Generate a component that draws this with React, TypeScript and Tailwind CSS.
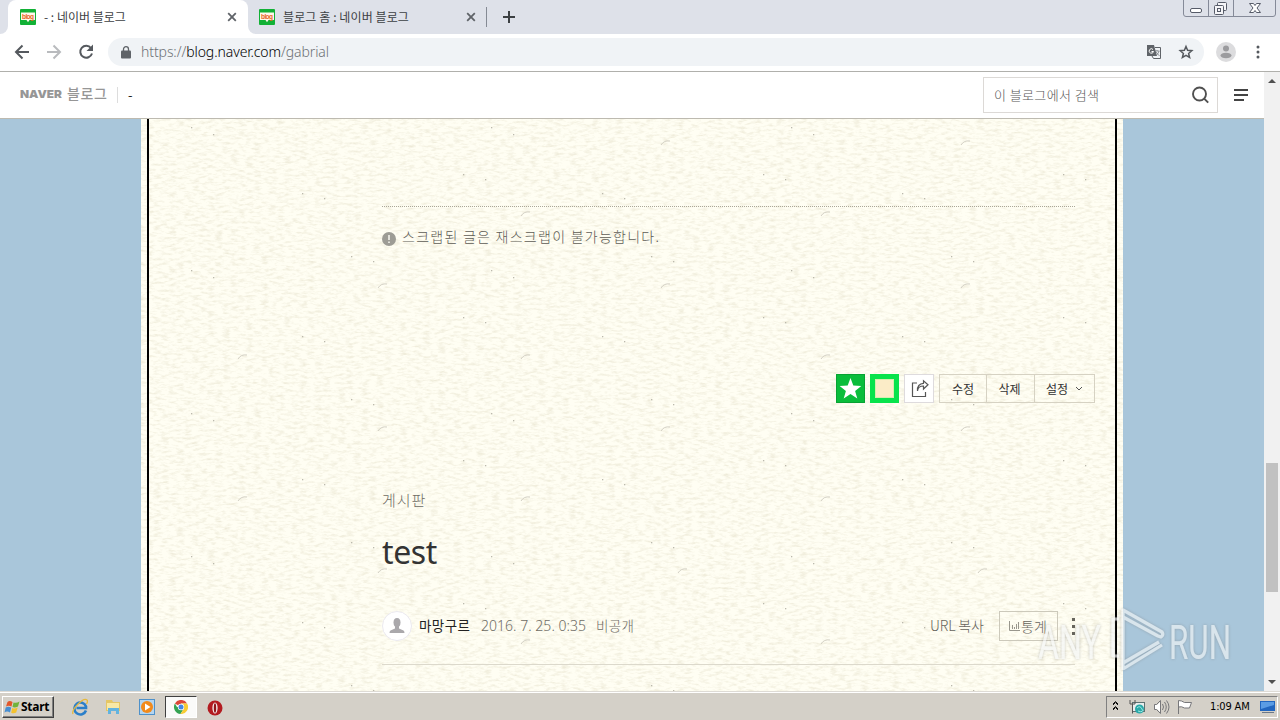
import React from "react";

const K = "font-['Noto_Sans_CJK_KR',sans-serif]";

function BlogIcon() {
  return (
    <svg width="16" height="16" viewBox="0 0 16 16" className="shrink-0">
      <rect width="16" height="16" rx="1" fill="#12b136" />
      <path d="M1 3.500h14v7.500H9.500l-1.500 2.200L6.500 11H1z" fill="#fff8ec" />
      <text x="8" y="9.500" textAnchor="middle" fontSize="6.500" fontWeight="700" fontFamily="Liberation Sans" fill="#e8641c" textLength="12">blog</text>
    </svg>
  );
}

function Close() {
  return (
    <svg width="10" height="10" viewBox="0 0 10 10" className="shrink-0" stroke="#5f6368" strokeWidth="1.800">
      <path d="M1.200 1.200l7.600 7.600M8.800 1.200L1.200 8.800" />
    </svg>
  );
}

function TabStrip() {
  return (
    <div className="flex h-[34px] shrink-0 bg-[#dee1e9]">
      <div className="flex w-2 items-end bg-white"><div className="h-full w-full rounded-br-lg bg-[#dee1e9]" /></div>
      <div className="w-[240px] bg-[#dee1e9]">
        <div className="flex h-full items-center rounded-t-lg bg-white pl-3 pr-[11px]">
          <BlogIcon />
          <span className="ml-2 flex-1 whitespace-nowrap text-[12px] text-[#3c4043]">- : 네이버 블로그</span>
          <Close />
        </div>
      </div>
      <div className="w-2 bg-white"><div className="h-full w-full rounded-bl-lg bg-[#dee1e9]" /></div>
      <div className="flex w-[231px] items-center pl-[3px] pr-[11px]">
        <BlogIcon />
        <span className="ml-2 flex-1 whitespace-nowrap text-[12px] tracking-[0.1px] text-[#3c4043]">블로그 홈 : 네이버 블로그</span>
        <Close />
      </div>
      <div className="-ml-px mt-[7px] h-5 w-px bg-[#858a94]" />
      <svg width="14" height="14" viewBox="0 0 14 14" className="ml-[15px] mt-[10px]" stroke="#3c4043" strokeWidth="2"><path d="M1 7h12M7 1v12" /></svg>
      <svg width="96" height="18" viewBox="0 0 96 18" className="ml-auto mr-1" fill="none" stroke="#858a98">
        <path d="M3.500 0v14q0 2.500 2.500 2.500h87q2.500 0 2.500-2.500V0M28.500 0v16M53.500 0v16" />
        <g transform="translate(-1 0)" stroke="#565b68">
          <rect x="11.500" y="8.500" width="11" height="4" rx="1.500" fill="#fff" />
          <rect x="38.500" y="2.500" width="9" height="8" rx="1" fill="#f5f5f8" />
          <rect x="35.500" y="5.500" width="9" height="9" rx="1" fill="#f5f5f8" />
          <rect x="38.500" y="8.500" width="3" height="3" />
          <path d="M70.500 3.500h4l1.500 2 1.500-2h4l-3.500 4.500 3.500 4.500h-4l-1.500-2-1.500 2h-4L74 8z" fill="#fff" />
        </g>
      </svg>
    </div>
  );
}

function Toolbar() {
  return (
    <div className="flex h-[38px] shrink-0 items-center border-b border-[#b0b0ac] bg-white pb-px">
      <svg width="108" height="36" viewBox="0 0 108 36" fill="none" strokeWidth="2">
        <path d="M29 18H16M22.500 11.500L16 18l6.500 6.500" stroke="#55595e" />
        <path d="M47 18h13M53.500 11.500L60 18l-6.500 6.500" stroke="#b9bbbe" />
        <path d="M91 14A6 6 0 1 0 92 19.500" stroke="#55595e" />
        <path d="M93 10.500v6.500h-6.500z" fill="#55595e" />
      </svg>
      <div className="flex h-7 w-[1096px] items-center rounded-full bg-[#f0f3f6] pl-[13px] pr-[10px]">
        <svg width="10" height="13" viewBox="0 0 10 13"><rect y="4.500" width="10" height="8" rx="1" fill="#5f6368" /><path d="M2.500 5V3.200a2.500 2.500 0 0 1 5 0V5" fill="none" stroke="#5f6368" strokeWidth="1.300" /></svg>
        <svg width="200" height="24" className="ml-[10px]" fontFamily="'Noto Sans', sans-serif" fontSize="14" fontWeight="300">
          <text x="0" y="17" textLength="188" lengthAdjust="spacing" fill="#6d7175">https://<tspan fill="#000">blog.naver.com</tspan>/gabrial</text>
        </svg>
        <svg width="16" height="16" viewBox="0 0 16 16" className="ml-auto">
          <path d="M1 1h7l3 11H1z" fill="#5f6368" />
          <path d="M9 3.500h5.500v11H7.500L6 12" fill="none" stroke="#5f6368" />
          <path d="M7 5.500A2.200 2.200 0 1 0 7.500 7.500H5.500" fill="none" stroke="#fff" />
          <path d="M9 7h4.500M11 6v1M13 7q-.500 3-3 4.500M10 8l3.500 4" fill="none" stroke="#7a7e83" strokeWidth=".8" />
        </svg>
        <svg width="16" height="16" viewBox="0 0 16 16" className="ml-4" fill="none" stroke="#55595e" strokeWidth="1.500"><path d="M8 2.500l1.600 3.800 4.200.4-3.200 2.700 1 4.100L8 11.300l-3.600 2.200 1-4.100-3.200-2.700 4.200-.4z" /></svg>
      </div>
      <svg width="20" height="20" viewBox="0 0 20 20" className="ml-3"><circle cx="10" cy="10" r="10" fill="#dcdcde" /><circle cx="10" cy="6.500" r="3" fill="#9b9b9e" /><ellipse cx="10" cy="13.500" rx="5.500" ry="2.800" fill="#9b9b9e" /></svg>
      <svg width="4" height="14" viewBox="0 0 4 14" className="ml-5" fill="#55595e"><circle cx="2" cy="2" r="1.500" /><circle cx="2" cy="7" r="1.500" /><circle cx="2" cy="12" r="1.500" /></svg>
    </div>
  );
}

function BlogHeader() {
  return (
    <div className="flex h-[47px] shrink-0 items-center border-b border-[#bdbab0] bg-white pl-5">
      <svg width="90" height="24" className="shrink-0" fill="#969696">
        <text x="0" y="15" fontFamily="Inter, sans-serif" fontWeight="900" fontSize="11" textLength="42" lengthAdjust="spacingAndGlyphs">NAVER</text>
        <text x="47" y="16" fontFamily="'Noto Sans CJK KR', sans-serif" fontSize="14" textLength="40" fontWeight="500">블로그</text>
      </svg>
      <div className="ml-[7px] h-4 w-px bg-[#ddd]" />
      <span className="ml-[10px] text-[13px] text-[#222]">-</span>
      <div className="ml-auto flex h-9 w-[235px] items-center border border-[#dcd9d6] pl-[10px] pr-2">
        <span className="flex-1 text-[13px] font-light tracking-[0.4px] text-[#555]">이 블로그에서 검색</span>
        <svg width="18" height="18" viewBox="0 0 18 18" fill="none" stroke="#505050" strokeWidth="1.900"><circle cx="8.500" cy="8" r="6.500" /><path d="M13.200 12.700l4 4" /></svg>
      </div>
      <svg width="14" height="12" viewBox="0 0 14 12" className="ml-4 mr-4" fill="#444"><path d="M0 0h14v2H0zM0 5h14v2H0zM0 10h10v2H0z" /></svg>
    </div>
  );
}

const curls = [[525, 93], [825, 93], [665, 22], [965, 22], [525, 236], [825, 236], [665, 165], [965, 165], [525, 378], [825, 378], [665, 308], [965, 308], [382, 450], [682, 450], [982, 450], [525, 521], [825, 521], [382, 165], [382, 308], [242, 236], [242, 378]];
const specks = [[191, 8], [213, 15], [302, 74], [324, 79], [351, 137], [373, 142], [463, 55], [485, 60]];

function Paper() {
  return (
    <svg width="982" height="572" viewBox="141 0 982 572" className="absolute inset-0">
      <defs>
        <filter id="fibre" x="0" y="0" width="100%" height="100%" colorInterpolationFilters="sRGB">
          <feTurbulence type="fractalNoise" baseFrequency="0.13 0.38" numOctaves="3" seed="29" />
          <feColorMatrix values="0 0 0 0 0.82  0 0 0 0 0.79  0 0 0 0 0.67  1.400 0 0 0 -0.620" />
        </filter>
      </defs>
      <rect x="141" width="982" height="572" fill="#fffef3" />
      <rect x="141" width="982" height="572" filter="url(#fibre)" opacity=".58" />
      {curls.map(([x, y], i) => (
        <path key={i} d={`M${x - 4} ${y + 4}q3-5 9-4`} fill="none" stroke="#d3d0c4" />
      ))}
      {[0, 1, 2, 3].flatMap((r) => [0, 300, 600].flatMap((dx) => specks.map(([x, y]) => (
        <rect key={`${r}-${dx}-${x}`} x={x + dx} y={y + r * 143} width="1.300" height="1.300" fill="#bbb8ac" />
      ))))}
      <path d="M148 0v572M1116 0v572" stroke="#000" strokeWidth="2" />
    </svg>
  );
}

function Actions() {
  return (
    <div className="flex h-[29px] gap-[5px] self-end pr-7 text-[12px] text-[#333]">
      <div className="w-[29px] bg-[#0abd3b]"><svg width="29" height="29"><path d="M.5.5h28v28H.5z" fill="none" stroke="#08a233" /><path d="M14.500 4l2.800 7.600 8 .3-6.200 5 2.200 7.700-6.800-4.500-6.800 4.500 2.200-7.700-6.200-5 8-.3z" fill="#fff" /></svg></div>
      <div className="flex w-[29px] items-center justify-center bg-[#08e34c]"><div className="h-[19px] w-[19px] border border-[#d5efae] bg-[#fbecc7]" /></div>
      <div className="w-[30px] border border-[#dedbdd] bg-white">
        <svg width="28" height="27" viewBox="0 0 28 27" fill="none" stroke="#555" strokeWidth="1.200"><path d="M12 8H7.500v13.500h13V17" /><path d="M12.500 16c.3-3.500 2.500-5 6-5v3l4.500-4.300L18.500 5.800v2.500c-4 .3-6.500 3-6 7.700z" /></svg>
      </div>
      <div className="flex w-[156px] border border-[#d6d2c3] leading-[27px]">
        <div className="w-[46px] text-center">수정</div>
        <div className="w-12 border-l border-[#d6d2c3] pr-0.5 text-center">삭제</div>
        <div className="flex flex-1 items-center border-l border-[#d6d2c3] pl-[11px]">설정<svg width="8" height="6" className="ml-[7px]" fill="none" stroke="#555"><path d="M1 1l3 3 3-3" /></svg></div>
      </div>
    </div>
  );
}

function Post() {
  return (
    <div className="relative w-[982px] shrink-0 overflow-hidden">
      <Paper />
      <div className="relative flex h-full flex-col pl-[241px]">
        <svg width="693" height="1" className="mt-[87px] shrink-0"><path d="M0 .5h693" stroke="#aaa798" strokeDasharray="1 1" /></svg>
        <div className="mt-5 flex h-[22px] items-center text-[14px] font-light text-[#66645c]">
          <svg width="14" height="14" viewBox="0 0 14 14" className="mr-[6px] mt-[2px]"><circle cx="7" cy="7" r="7" fill="#9d9c95" /><path d="M6 3h2v5H6zM6 9.500h2v1.500H6z" fill="#e2e1da" /></svg>
          <svg width="270" height="22"><text x="0" y="15" fill="#5e5c55" textLength="257">스크랩된 글은 재스크랩이 불가능합니다.</text></svg>
        </div>
        <div className="mt-[125px] flex flex-col"><Actions /></div>
        <div className="mt-[85px] h-6 text-[15px] font-light leading-6 tracking-[1px] text-[#6e6c64]">게시판</div>
        <div className="mt-[18px] flex h-11 items-center font-['Noto_Sans',sans-serif] text-[32px] leading-[44px] tracking-[-0.4px] text-[#333]">test</div>
        <div className="mt-[37px] flex h-[30px] items-center text-[13px]">
          <svg width="30" height="30" viewBox="0 0 30 30"><circle cx="15" cy="15" r="14.500" fill="#fff" stroke="#ebe9ef" /><ellipse cx="15" cy="11.500" rx="3.500" ry="4.500" fill="#aaa8ab" /><path d="M13 14h4v3.500l4.500 2q1 .8 1 2.500h-15q0-1.700 1-2.500l4.500-2z" fill="#aaa8ab" /></svg>
          <svg width="518" height="30" fontSize="13.500" className="shrink-0">
            <text x="7" y="19.500" fill="#222" textLength="51">마망구르</text>
            <text x="69" y="19.500" fill="#6e6c64" fontSize="14" fontWeight="300" fontFamily="'Noto Sans', sans-serif" textLength="105">2016. 7. 25. 0:35</text>
            <text x="184" y="19.500" fill="#6e6c64" fontWeight="300" textLength="38">비공개</text>
          </svg>
          <svg width="69" height="30" className="shrink-0"><text x="0" y="19.500" fontSize="14" fill="#66645c" fontWeight="300" textLength="54">URL 복사</text></svg>
          <div className="flex h-[30px] w-[59px] items-center border border-[#ccc9bb] pl-[9px] text-[#66645c]">
            <svg width="12" height="11" fill="none" stroke="#99978d"><path d="M.5 0v9.500H11M3.500 4v4M5.500 6v2M7.500 3v5M9.500 1v7" /></svg>
            <span className="whitespace-nowrap text-[14px] font-light">통계</span>
          </div>
          <svg width="4" height="18" className="ml-[14px]" fill="#66645c"><path d="M0 1h3v3H0zM0 8h3v3H0zM0 15h3v3H0z" /></svg>
        </div>
        <div className="mt-[23px] h-px w-[693px] bg-[#dcd9cc]" />
      </div>
    </div>
  );
}

function Scrollbar() {
  return (
    <div className="flex w-4 shrink-0 flex-col items-center bg-[#f1f1f1]">
      <svg width="8" height="4" className="mt-[7px]" fill="#505050"><path d="M0 4l4-4 4 4z" /></svg>
      <div className="mt-[380px] h-[129px] w-3 bg-[#c1c1c1]" />
      <svg width="8" height="4" className="mt-[88px]" fill="#505050"><path d="M0 0h8L4 4z" /></svg>
    </div>
  );
}

function Taskbar() {
  return (
    <div className="flex h-[29px] shrink-0 items-center border-t border-[#dedbd5] bg-[#d4d0c8] shadow-[inset_0_1px_0_#fff]">
      <div className="ml-[2px] mt-[2px] flex h-[22px] w-[52px] items-center border border-b-[#404040] border-l-white border-r-[#404040] border-t-white pl-px shadow-[inset_-1px_-1px_0_#808080]">
        <svg width="17" height="16" viewBox="0 0 16 16" className="shrink-0"><path d="M3 3q2-2 5 0L7 7.500q-3-1.500-5.500 0z" fill="#e2572b" /><path d="M9 3.500q3 1 6-1l-1.500 5q-3 1.500-5.500.500z" fill="#70b33c" /><path d="M1.200 8.500q2.500-1.500 5.500 0l-1.200 5q-3-2-5.500 0z" fill="#468ed2" /><path d="M7.700 9q2.500 1.300 5.500-.500l-1.500 5q-2.500 1.500-5 .300z" fill="#f4c22e" /></svg>
        <span className="font-['Noto_Sans',sans-serif] text-[12px] font-bold leading-4 tracking-[-0.25px] text-black">Start</span>
      </div>
      <svg width="16" height="18" viewBox="0 0 16 18" className="ml-[18px] mt-px" fill="none"><path d="M14 12.500A6 6 0 1 1 14 8.500v1.500H4.500" stroke="#2b7fc9" strokeWidth="2.600" /><path d="M1 16C-1 12 11-1 15 2q1.200 1.200-.500 4" stroke="#e6b93c" strokeWidth="1.300" /></svg>
      <svg width="17" height="18" viewBox="0 0 17 18" className="ml-[17px] mt-px"><path d="M1 2h6l1 2h7v9H1z" fill="#e5c665" /><path d="M2 5h12v7H2z" fill="#f8e8a5" /><path d="M3 16v-6h11v6h-3v-3H6v3z" fill="#62b3df" /></svg>
      <svg width="17" height="17" viewBox="0 0 17 17" className="ml-[17px] mt-[2px]"><rect x=".5" y=".5" width="15" height="15" fill="#b4d5f0" stroke="#4e91ca" /><circle cx="8" cy="8" r="6" fill="#f28a1b" /><path d="M6 4.500v7L11.500 8z" fill="#fff" /></svg>
      <div className="ml-[9px] mt-[2px] flex h-[22px] w-8 items-center justify-center border border-b-white border-l-[#404040] border-r-white border-t-[#404040] bg-[#fafaf9]">
        <svg width="14" height="14" viewBox="0 0 14 14"><path d="M7 7L.9 3.500A7 7 0 0 1 13.100 3.500H7z" fill="#dc4638" /><path d="M7 7H3L.9 3.500A7 7 0 0 0 6.500 14l3-5z" fill="#35a353" /><path d="M7 3.500h6.100A7 7 0 0 1 6.500 14l3.300-5z" fill="#f8cc33" /><circle cx="7" cy="7" r="3.200" fill="#fff" /><circle cx="7" cy="7" r="2.500" fill="#4387e5" /></svg>
      </div>
      <svg width="16" height="16" viewBox="0 0 16 16" className="ml-[10px] mt-[3px]"><circle cx="8" cy="8" r="7.500" fill="#b31b20" /><ellipse cx="8" cy="8" rx="2.600" ry="5.500" fill="#f7eded" /><ellipse cx="8" cy="8" rx="1.200" ry="4.800" fill="#8e1519" /></svg>
      <div className="ml-auto mr-[2px] mt-[2px] flex h-[22px] w-[172px] items-center border border-b-white border-l-[#808080] border-r-white border-t-[#808080]">
        <svg width="85" height="18" viewBox="0 0 85 18" className="shrink-0">
          <path d="M6 6l2.500-2.500L11 6M6 11l2.500-2.500L11 11M6 7l2.500-2.500L11 7M6 12l2.500-2.500L11 12" fill="none" stroke="#111" strokeWidth="1" />
          <rect x="25.500" y="4.500" width="12" height="9" fill="#e9eeee" stroke="#5f7172" /><path d="M23 2v4h5V2M25.500 6v9.500" stroke="#555" fill="none" /><circle cx="32.500" cy="11" r="4.500" fill="#29aaa9" /><path d="M30 10q3-3 5 1t-4 2" stroke="#a4e7e3" fill="none" />
          <path d="M47.500 6.500h2l4-4v13l-4-4h-2zM55.500 6q2 3 0 6M57.500 4q3.500 5 0 10M59.500 2.500q5 6.500 0 13" fill="none" stroke="#77777a" /><path d="M48 7h2l3-3v10l-3-3h-2z" fill="#fff" />
          <path d="M71.500 16V2.500q3 0 6 2h7l-2 5.500h-5q-3-2-6-1" fill="#fff" stroke="#77777a" />
        </svg>
        <span className="ml-[18px] whitespace-nowrap font-['DejaVu_Sans_Condensed','DejaVu_Sans',sans-serif] text-[11px] tracking-[-0.15px] text-black">1:09 AM</span>
        <svg width="16" height="14" viewBox="0 0 16 14" className="ml-auto mr-px shrink-0"><path d="M0 1h15v10H0z" fill="#2166bf" /><path d="M1 2h13v3L1 9z" fill="#5a9ce4" /><path d="M2 12h12v1H2z" fill="#6b7889" /></svg>
      </div>
    </div>
  );
}

function Watermark() {
  return (
    <svg width="214" height="80" viewBox="0 0 214 80" className="pointer-events-none absolute left-[1030px] top-[600px]" fontFamily="Roboto, sans-serif" fontSize="49" fontWeight="400">
      <defs><filter id="wm" x="-10%" y="-10%" width="120%" height="120%"><feDropShadow dx="0" dy="0" stdDeviation="1.500" floodColor="#777" floodOpacity=".7" /></filter></defs>
      <g filter="url(#wm)" fill="#f4f6f7" opacity=".65">
        <text x="8" y="59" textLength="63" lengthAdjust="spacingAndGlyphs">ANY</text>
        <text x="139" y="59" textLength="62" lengthAdjust="spacingAndGlyphs">RUN</text>
        <path d="M89 19h-6v37h6M128 36L93 17v-7l39 22q2 3-1 5zM93 17v46M93 63l36-21M93 69l39-24M93 63v7" fill="none" stroke="#f4f6f7" strokeWidth="3.200" strokeLinejoin="round" />
      </g>
    </svg>
  );
}

export default function App() {
  return (
    <div className={`${K} relative flex h-[720px] w-[1280px] flex-col overflow-hidden bg-white`}>
      <TabStrip />
      <Toolbar />
      <div className="flex h-[619px] shrink-0">
        <div className="flex w-[1264px] flex-col">
          <BlogHeader />
          <div className="flex h-[572px] bg-[#a9c6da] pl-[141px]"><Post /></div>
        </div>
        <Scrollbar />
      </div>
      <Taskbar />
      <Watermark />
    </div>
  );
}
